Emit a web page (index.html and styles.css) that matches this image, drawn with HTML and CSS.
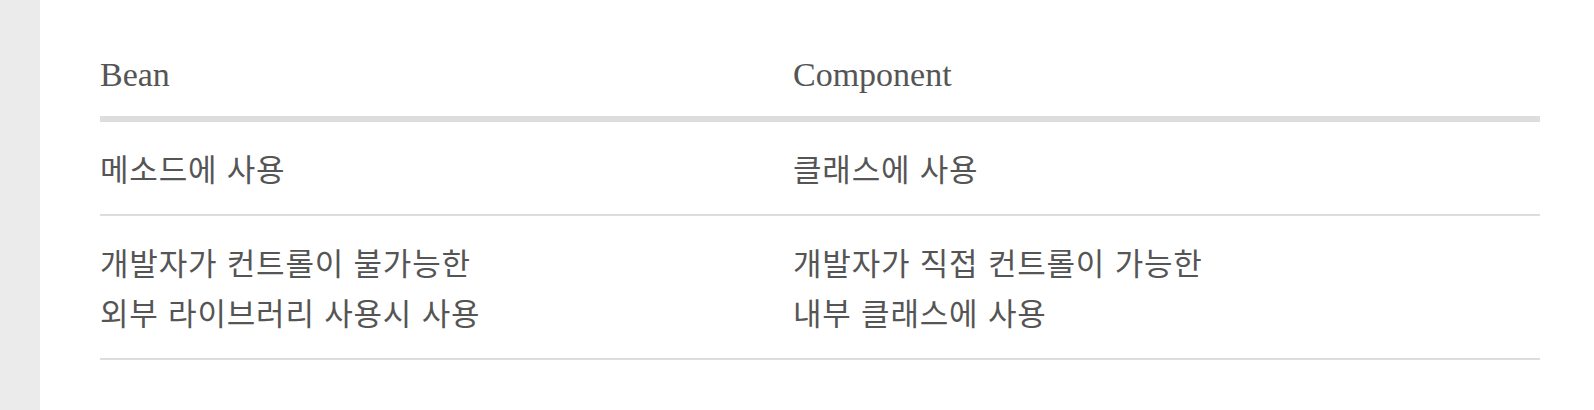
FILE: index.html
```html
<!DOCTYPE html>
<html lang="ko">
<head>
<meta charset="utf-8">
<title>Bean vs Component</title>
<link rel="stylesheet" href="styles.css">
</head>
<body>
<div class="page">
  <aside class="side"></aside>
  <main class="content">
    <table class="compare">
      <thead>
        <tr>
          <th class="col-a">Bean</th>
          <th>Component</th>
        </tr>
      </thead>
      <tbody>
        <tr>
          <td>메소드에 사용</td>
          <td>클래스에 사용</td>
        </tr>
        <tr>
          <td>개발자가 컨트롤이 불가능한<br>외부 라이브러리 사용시 사용</td>
          <td>개발자가 직접 컨트롤이 가능한<br>내부 클래스에 사용</td>
        </tr>
      </tbody>
    </table>
  </main>
</div>
</body>
</html>
```
FILE: styles.css
```css
html, body {
  margin: 0;
  padding: 0;
  background: #ffffff;
}

.page {
  display: flex;
  min-height: 410px;
}

.side {
  width: 40px;
  flex: 0 0 40px;
  background: #ebebeb;
}

.content {
  flex: 1;
  padding: 29px 54px 0 60px;
}

.compare {
  width: 1440px;
  border-collapse: collapse;
  border-spacing: 0;
  color: #555555;
}

.compare th {
  font-family: "Liberation Serif", "Noto Sans CJK KR", serif;
  font-size: 34px;
  font-weight: normal;
  line-height: 50px;
  text-align: left;
  padding: 21px 0 16px 0;
  border-bottom: 6px solid #dddddd;
}

.compare .col-a {
  width: 693px;
}

.compare td {
  font-family: "Noto Sans CJK KR", "Noto Sans", sans-serif;
  font-size: 31px;
  letter-spacing: 0.8px;
  line-height: 50px;
  padding: 21px 0;
  vertical-align: top;
  border-bottom: 2px solid #dddddd;
}
```
